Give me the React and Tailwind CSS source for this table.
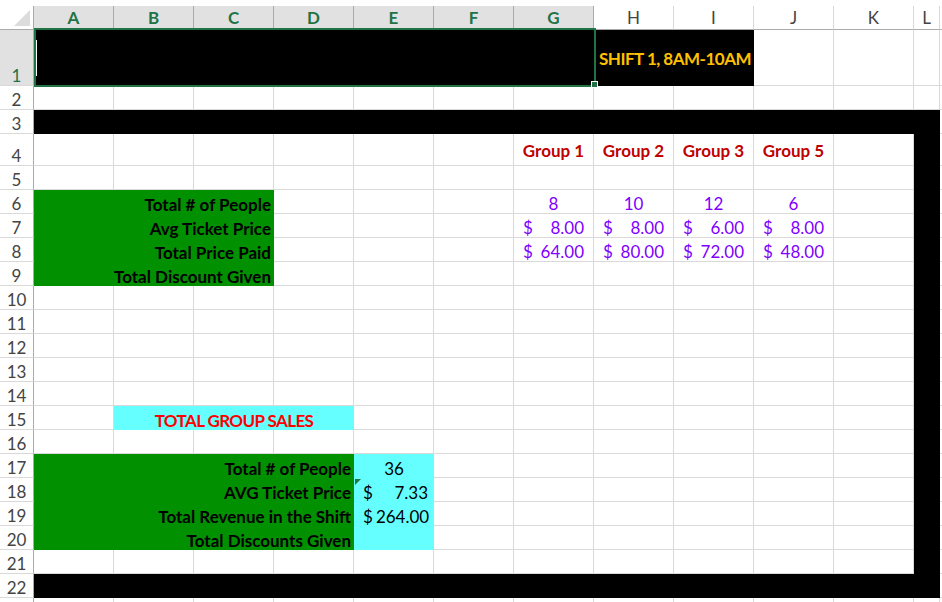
import React from "react";

const groups = [
  { label: "Group 1", people: 8, price: "8.00", paid: "64.00" },
  { label: "Group 2", people: 10, price: "8.00", paid: "80.00" },
  { label: "Group 3", people: 12, price: "6.00", paid: "72.00" },
  { label: "Group 5", people: 6, price: "8.00", paid: "48.00" },
];

function Row({ n, h = "h-6", sel, children }) {
  return (
    <div className={`flex ${h}`}>
      <div
        className={`w-[34px] shrink-0 flex items-end justify-center pb-px border-r border-b border-r-[#ababab] border-b-[#d9d9d9] ${
          sel ? "bg-[#e1e1e1] text-[#217346]" : "bg-white text-[#444]"
        }`}
      >
        {n}
      </div>
      {children}
      <div className="flex-1 border-b border-[#d9d9d9] bg-white" />
    </div>
  );
}

function Cell({ w = "w-20", fill, pb = "pb-px", className = "", children }) {
  const base = fill ? fill : "bg-white border-r border-b border-[#d9d9d9]";
  return <div className={`${w} shrink-0 flex items-end whitespace-nowrap ${pb} ${base} ${className}`}>{children}</div>;
}

function Blanks({ count }) {
  return Array.from({ length: count }).map((_, i) => <Cell key={i} />);
}

const Black = () => <Cell w="w-[26px]" fill="bg-black" />;

function Money({ value }) {
  return (
    <div className="flex w-full justify-between gap-[3px]">
      <span>$</span>
      <span>{value}</span>
    </div>
  );
}

function BlankRow({ n }) {
  return (
    <Row n={n}>
      <Blanks count={11} />
      <Black />
    </Row>
  );
}

export default function App() {
  const cols = ["A", "B", "C", "D", "E", "F", "G"];
  const rest = ["H", "I", "J", "K"];
  const topLabels = ["Total # of People", "Avg Ticket Price", "Total Price Paid", "Total Discount Given"];

  return (
    <div className="w-[942px] h-[602px] overflow-hidden bg-white pt-[6px] font-[family-name:Lato,sans-serif] text-[17px] leading-none text-black">
      {/* column headers */}
      <div className="flex h-6">
        <div className="w-[34px] shrink-0 relative bg-white border-r border-b border-[#ababab]">
          <div className="absolute right-[3px] bottom-[3px] w-0 h-0 border-l-[16px] border-l-transparent border-b-[16px] border-b-[#dcdcdc]" />
        </div>
        {cols.map((c) => (
          <div key={c} className="w-20 shrink-0 flex items-center justify-center bg-[#e1e1e1] border-r border-r-[#ababab] border-b border-b-[#217346] text-[#217346] font-bold">
            {c}
          </div>
        ))}
        {rest.map((c) => (
          <div key={c} className="w-20 shrink-0 flex items-center justify-center bg-white border-r border-r-[#d9d9d9] border-b border-b-[#ababab] text-[#444]">
            {c}
          </div>
        ))}
        <div className="w-[26px] shrink-0 flex items-center justify-center bg-white border-r border-r-[#d9d9d9] border-b border-b-[#ababab] text-[#444]">L</div>
        <div className="flex-1 border-b border-[#ababab]" />
      </div>

      {/* row 1 */}
      <Row n={1} h="h-14" sel>
        <div className="w-[560px] shrink-0 bg-black relative">
          <div className="absolute left-0 -top-0.5 w-[562px] h-[59px] border-2 border-[#217346]" />
          <div className="absolute left-[2px] top-[10px] w-px h-[36px] bg-white" />
          <div className="absolute left-[557px] top-[51px] w-[7px] h-[7px] bg-[#217346] border border-white" />
        </div>
        <div className="w-40 shrink-0 bg-black flex items-center pl-[5px] whitespace-nowrap tracking-[-0.5px] text-[#ffc000] font-bold">
          SHIFT 1, 8AM-10AM
        </div>
        <Blanks count={2} />
        <Cell w="w-[26px]" />
      </Row>

      <Row n={2}>
        <Blanks count={11} />
        <Cell w="w-[26px]" />
      </Row>

      <Row n={3}>
        <Cell w="w-[906px]" fill="bg-black" />
      </Row>

      <Row n={4} h="h-8">
        <Blanks count={6} />
        {groups.map((g) => (
          <Cell key={g.label} pb="pb-[6px]" className="justify-center text-[#c00000] font-bold">
            {g.label}
          </Cell>
        ))}
        <Cell />
        <Black />
      </Row>

      <BlankRow n={5} />

      {topLabels.map((label, i) => (
        <Row key={label} n={6 + i}>
          <Cell w="w-60" fill="bg-[#009000]" className="justify-end pr-[3px] font-bold">
            {label}
          </Cell>
          <Blanks count={3} />
          {groups.map((g) => (
            <Cell key={g.label} className="justify-center px-[9px] text-[#7f00ff]">
              {i === 0 && g.people}
              {i === 1 && <Money value={g.price} />}
              {i === 2 && <Money value={g.paid} />}
            </Cell>
          ))}
          <Cell />
          <Black />
        </Row>
      ))}

      {[10, 11, 12, 13, 14].map((n) => (
        <BlankRow key={n} n={n} />
      ))}

      <Row n={15}>
        <Cell />
        <Cell w="w-60" fill="bg-[#66ffff]" className="justify-center tracking-[-0.6px] text-[#ff0000] font-bold">
          TOTAL GROUP SALES
        </Cell>
        <Blanks count={7} />
        <Black />
      </Row>

      <BlankRow n={16} />

      <Row n={17}>
        <Cell w="w-80" fill="bg-[#009000]" className="justify-end pr-[3px] font-bold">Total # of People</Cell>
        <Cell fill="bg-[#66ffff]" className="justify-center">36</Cell>
        <Blanks count={6} />
        <Black />
      </Row>
      <Row n={18}>
        <Cell w="w-80" fill="bg-[#009000]" className="justify-end pr-[3px] font-bold">AVG Ticket Price</Cell>
        <Cell fill="bg-[#66ffff]" className="relative pl-[9px] pr-[6px]">
          <div className="absolute left-px top-px w-0 h-0 border-t-[6px] border-t-[#1e7a3c] border-r-[6px] border-r-transparent" />
          <Money value="7.33" />
        </Cell>
        <Blanks count={6} />
        <Black />
      </Row>
      <Row n={19}>
        <Cell w="w-80" fill="bg-[#009000]" className="justify-end pr-[3px] font-bold">Total Revenue in the Shift</Cell>
        <Cell fill="bg-[#66ffff]" className="pl-[9px] pr-[6px]">
          <Money value="264.00" />
        </Cell>
        <Blanks count={6} />
        <Black />
      </Row>
      <Row n={20}>
        <Cell w="w-80" fill="bg-[#009000]" className="justify-end pr-[3px] font-bold">Total Discounts Given</Cell>
        <Cell fill="bg-[#66ffff]" />
        <Blanks count={6} />
        <Black />
      </Row>

      <BlankRow n={21} />

      <Row n={22}>
        <Cell w="w-[906px]" fill="bg-black" />
      </Row>

      <Row n="">
        <Blanks count={11} />
        <Cell w="w-[26px]" />
      </Row>
    </div>
  );
}
